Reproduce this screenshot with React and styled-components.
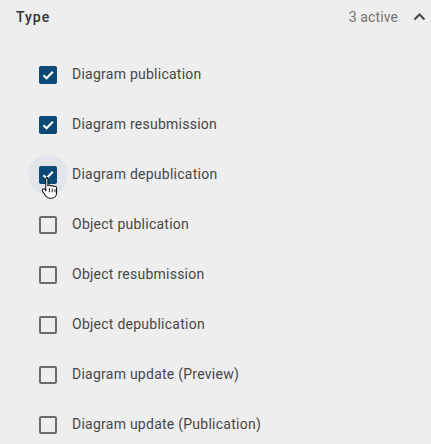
import React from 'react'
import styled, { createGlobalStyle } from 'styled-components'

const GlobalStyle = createGlobalStyle`
  body {
    margin: 0;
    background: #eeeeee;
    font-family: Roboto, 'Liberation Sans', sans-serif;
  }
`

const Panel = styled.div`
  width: 431px;
  height: 444px;
  overflow: hidden;
  background: #eeeeee;
`

const Header = styled.div`
  height: 34px;
  display: flex;
  align-items: center;
  padding: 0 5px 0 16px;
`

const Title = styled.div`
  flex: 1;
  font-size: 14px;
  font-weight: 500;
  letter-spacing: 1px;
  color: #333333;
`

const ActiveCount = styled.div`
  font-size: 14px;
  letter-spacing: 0.1px;
  color: #737373;
  margin-right: 15px;
`

const List = styled.div`
  padding-top: 16px;
  display: flex;
  flex-direction: column;
`

const Row = styled.label`
  height: 50px;
  display: flex;
  align-items: center;
  padding-left: 39px;
  gap: 15px;
  font-size: 14px;
  letter-spacing: 0.25px;
  color: #474747;
`

const Label = styled.span`
  margin-top: -2px;
`

const BoxWrap = styled.span`
  position: relative;
  width: 18px;
  height: 18px;
  flex: none;
`

const Halo = styled.span`
  position: absolute;
  left: -11px;
  top: -11px;
  width: 40px;
  height: 40px;
  border-radius: 50%;
  background: #e2e5e9;
`

const Box = styled.span`
  position: relative;
  display: flex;
  align-items: center;
  justify-content: center;
  box-sizing: border-box;
  width: 18px;
  height: 18px;
  border-radius: 2px;
  background: ${p => (p.checked ? '#0b4977' : 'transparent')};
  border: ${p => (p.checked ? 'none' : '2px solid #6b6b6b')};
`

const Cursor = styled.svg`
  position: absolute;
  left: 2px;
  top: 10px;
  width: 18px;
  height: 24px;
`

const Check = () => (
  <svg width="14" height="14" viewBox="0 0 14 14">
    <path d="M2.4 7.2 L5.6 10.3 L11.8 3.8" fill="none" stroke="#fff" strokeWidth="2" />
  </svg>
)

const Hand = () => (
  <Cursor viewBox="0 0 17 22">
    <path
      d="M5 1.2c.9 0 1.5.6 1.5 1.5v6.2c.3-.5.8-.8 1.4-.8.8 0 1.3.5 1.4 1.1.3-.4.7-.6 1.3-.6.8 0 1.3.5 1.4 1.2.3-.3.7-.5 1.2-.5.9 0 1.5.7 1.5 1.6v4.8c0 2.8-2 5-4.8 5H8.2c-1.7 0-2.8-.8-3.8-2.1L1.5 14c-.5-.7-.4-1.5.2-1.9.6-.5 1.4-.3 1.9.3l.9 1.2V2.7c0-.9.6-1.5 1.5-1.5z"
      fill="#fff"
      stroke="#111"
      strokeWidth="1"
      strokeLinejoin="round"
    />
    <path d="M7.9 11v4M10.6 11.5v3.5M13.2 12v3" stroke="#111" strokeWidth="0.9" />
  </Cursor>
)

const items = [
  { label: 'Diagram publication', checked: true },
  { label: 'Diagram resubmission', checked: true },
  { label: 'Diagram depublication', checked: true, hover: true },
  { label: 'Object publication' },
  { label: 'Object resubmission' },
  { label: 'Object depublication' },
  { label: 'Diagram update (Preview)' },
  { label: 'Diagram update (Publication)' }
]

const App = () => (
  <Panel>
    <GlobalStyle />
    <Header>
      <Title>Type</Title>
      <ActiveCount>3 active</ActiveCount>
      <svg width="13" height="12" viewBox="0 0 13 12">
        <path d="M1.5 8.5 L6.5 3.5 L11.5 8.5" fill="none" stroke="#444" strokeWidth="2" />
      </svg>
    </Header>
    <List>
      {items.map(item => (
        <Row key={item.label}>
          <BoxWrap>
            {item.hover && <Halo />}
            <Box checked={item.checked}>{item.checked && <Check />}</Box>
            {item.hover && <Hand />}
          </BoxWrap>
          <Label>{item.label}</Label>
        </Row>
      ))}
    </List>
  </Panel>
)

export default App
